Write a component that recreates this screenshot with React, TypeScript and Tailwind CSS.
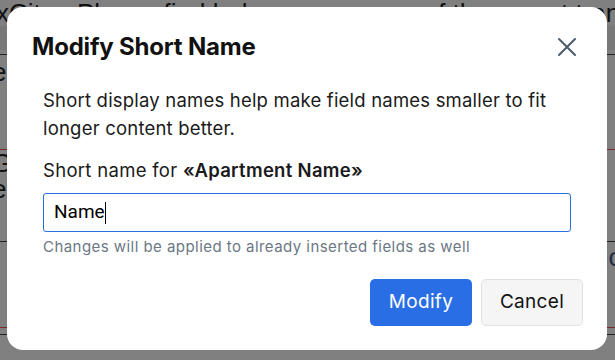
import React from 'react';

const Backdrop: React.FC = () => {
	return <div className="flex flex-col text-[#111] font-['Liberation_Sans',sans-serif]">
		<div className="h-[28px] bg-[#808080] overflow-hidden whitespace-nowrap -ml-[4px] text-[26px] leading-[30px] -mt-[2px]">xCity - Please find below a summary of the recent transactions</div>
		<div className="h-[24px] bg-[#787878]" />
		<div className="h-[4px] bg-[#808080]" />
		<div className="h-[95px] bg-[#808080] border-t border-[#222] flex justify-between text-[26px] leading-[30px] pt-[2px]">
			<span className="-ml-[8px]">e</span>
			<span />
		</div>
		<div className="h-[92px] bg-[#808080] border-t border-[#7a2a2a] flex justify-between text-[26px] leading-[26px]">
			<span className="-ml-[8px]">G<br />e</span>
			<span />
		</div>
		<div className="h-[86px] bg-[#808080] border-t border-[#222] flex justify-between text-[26px] leading-[30px]">
			<span />
			<span className="-mr-[8px] text-[#1d2b45]">io</span>
		</div>
		<div className="h-[7px] bg-[#808080] border-t border-[#7a2a2a]" />
		<div className="h-[30px] bg-[#808080] border-t border-[#222]" />
	</div>
}

const CloseIcon: React.FC = () => {
	return <svg width="20" height="20" viewBox="0 0 20 20" fill="none" stroke="#4b5b6b" strokeWidth="2" strokeLinecap="round">
		<path d="M2 2 L18 18 M18 2 L2 18" />
	</svg>
}

const ShortNameDialog: React.FC = () => {
	return <div className="absolute left-[7px] top-[7px] w-[600px] h-[343px] bg-white rounded-[16px] flex flex-col font-['Inter',sans-serif] text-[#111]">
		<div className="flex items-center justify-between pl-[25px] pr-[30px] pt-[25px]">
			<h2 className="text-[24px] font-bold leading-[30px] tracking-[-0.2px]">Modify Short Name</h2>
			<button className="focus:outline-none"><CloseIcon /></button>
		</div>
		<div className="flex flex-col px-[36px] pt-[24px]">
			<p className="text-[18.5px] leading-[28px] tracking-[0.2px] text-[#1a1a1a]">Short display names help make field names smaller to fit longer content better.</p>
			<label className="text-[18.5px] leading-[28px] tracking-[0.3px] mt-[14px] text-[#1a1a1a]">Short name for <b className="font-semibold">«Apartment Name»</b></label>
			<div className="mt-[9px] h-[39px] border border-[#2a6ee6] rounded-[3px] flex items-center px-[10px] font-['Roboto',sans-serif] text-[19px] text-black">
				Name<span className="w-px h-[22px] bg-black" />
			</div>
			<p className="mt-[5px] text-[15px] leading-[20px] tracking-[0.45px] text-[#6b7785]">Changes will be applied to already inserted fields as well</p>
		</div>
		<div className="flex justify-end gap-[9px] pr-[24px] mt-[22px]">
			<button className="w-[102px] h-[47px] rounded-[5px] bg-[#2a6ee6] text-white text-[19px] tracking-[0.3px]">Modify</button>
			<button className="w-[102px] h-[47px] rounded-[5px] bg-[#f5f5f5] border border-[#e1e1e1] text-[#111] text-[19px] tracking-[0.3px]">Cancel</button>
		</div>
	</div>
}

export default function App() {
	return <div className="relative w-[615px] h-[360px] overflow-hidden bg-[#808080]">
		<Backdrop />
		<ShortNameDialog />
	</div>
}
